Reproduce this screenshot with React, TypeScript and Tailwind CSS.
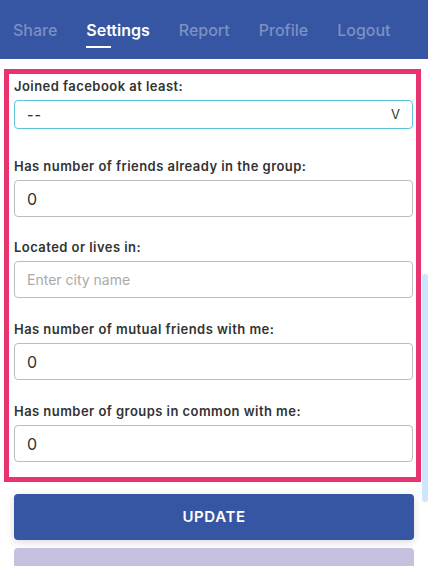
import { useState } from 'react'

const tabs = ['Share', 'Settings', 'Report', 'Profile', 'Logout']

function Field({ label, children }: { label: string; children: React.ReactNode }) {
  return (
    <div className="flex flex-col">
      <label className="h-[26px] pt-[4px] text-[13px] font-semibold leading-[16px] tracking-[0.45px] text-[#333]">{label}</label>
      {children}
    </div>
  )
}

function NumberInput({ value }: { value: string }) {
  return (
    <input
      defaultValue={value}
      className="h-[37px] w-full rounded-[4px] border border-[#bdbdbd] px-[12px] text-[16px] text-[#333] outline-none"
    />
  )
}

export default function App() {
  const [active] = useState('Settings')

  return (
    <div className="relative h-[566px] w-[428px] overflow-hidden bg-white font-['Inter',sans-serif]">
      <div className="flex h-[59px] items-start gap-[29px] bg-[#3656a3] px-[13px] pt-[19px]">
        {tabs.map((t) => (
          <div key={t} className="flex flex-col">
            <span
              className={
                t === active
                  ? 'text-[16px] font-semibold leading-[22px] text-white'
                  : 'text-[16px] font-medium leading-[22px] text-[#7d90c2]'
              }
            >
              {t}
            </span>
            {t === active && <span className="mt-[5px] h-[2px] w-[25px] bg-white" />}
          </div>
        ))}
      </div>

      <div className="ml-[4px] mt-[10px] w-[417px] border-[5px] border-[#e8336f] pb-[15px] pl-[5px] pr-[3px]">
        <Field label="Joined facebook at least:">
          <div className="flex h-[29px] items-center justify-between rounded-[4px] border border-[#5bc3dc] pl-[12px] pr-[12px] text-[14px] text-[#333]">
            <span className="font-medium tracking-[1px]">--</span>
            <span className="text-[13px]">V</span>
          </div>
        </Field>
        <div className="h-[25px]" />
        <Field label="Has number of friends already in the group:">
          <NumberInput value="0" />
        </Field>
        <div className="h-[18px]" />
        <Field label="Located or lives in:">
          <input
            placeholder="Enter city name"
            className="h-[37px] w-full rounded-[4px] border border-[#bdbdbd] px-[12px] text-[14px] text-[#333] outline-none placeholder:text-[#aaa]"
          />
        </Field>
        <div className="h-[19px]" />
        <Field label="Has number of mutual friends with me:">
          <NumberInput value="0" />
        </Field>
        <div className="h-[19px]" />
        <Field label="Has number of groups in common with me:">
          <NumberInput value="0" />
        </Field>
      </div>

      <div className="mt-[12px] flex flex-col gap-[8px] px-[14px]">
        <button className="h-[46px] w-full rounded-[4px] bg-[#3656a3] text-[15px] font-semibold tracking-[0.6px] text-white shadow-[0_2px_8px_rgba(0,0,0,0.15)]">
          UPDATE
        </button>
        <button className="h-[46px] w-full rounded-[4px] bg-[#c6c1de]" />
      </div>

      {/* scroll indicator */}
      <div className="absolute right-0 top-[274px] h-[228px] w-[6px] rounded-[3px] bg-[#cfe5fb]" />
    </div>
  )
}
